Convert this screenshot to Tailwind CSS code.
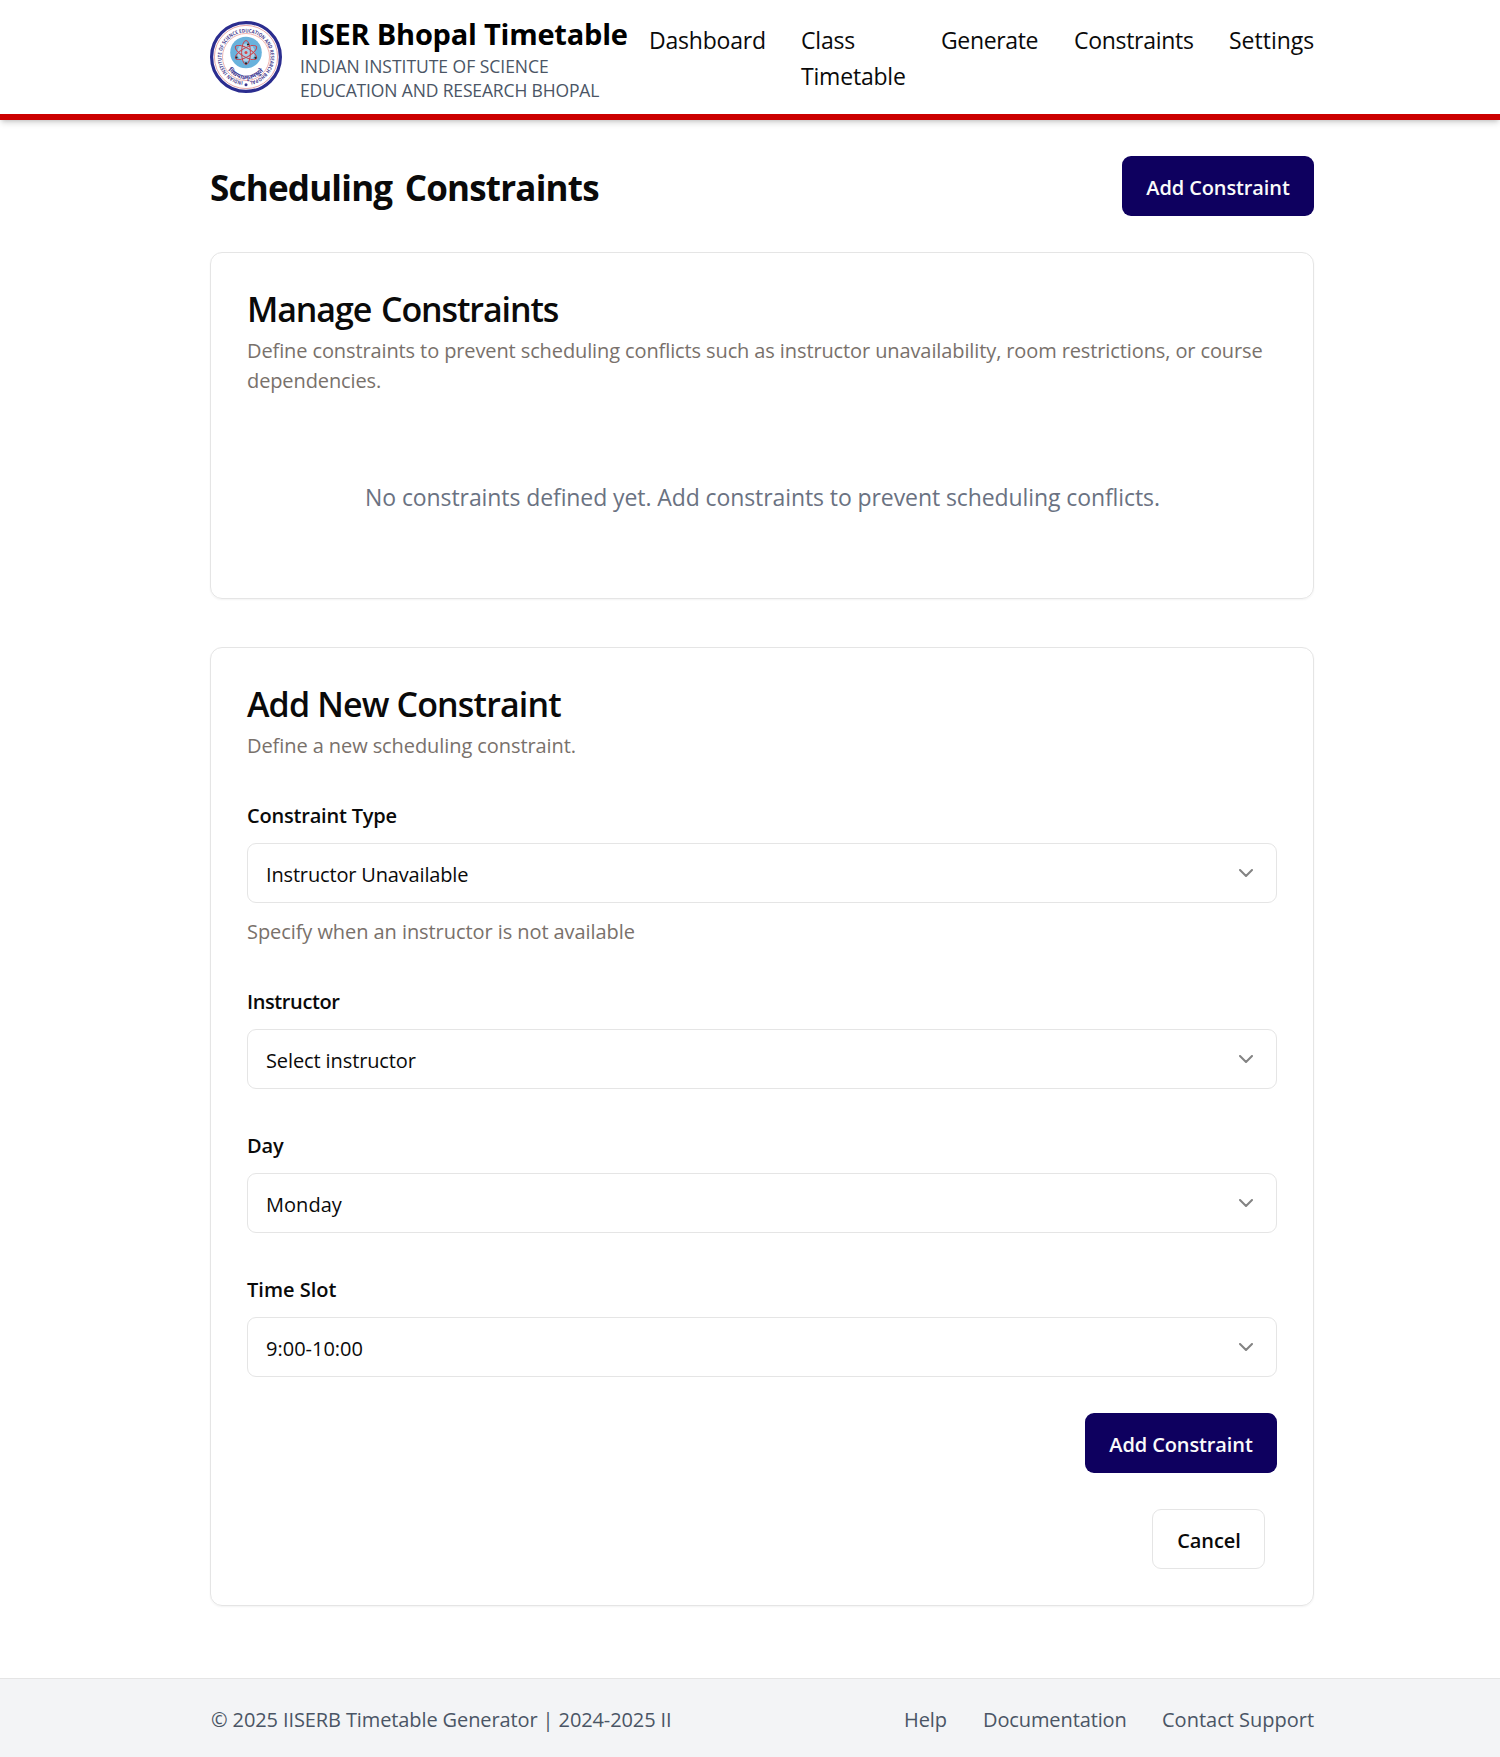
<!DOCTYPE html>
<html lang="en">
<head>
<meta charset="utf-8">
<title>IISER Bhopal Timetable</title>
<script src="https://cdn.jsdelivr.net/npm/@tailwindcss/browser@4"></script>
</head>
<body class="flex min-h-screen flex-col bg-white font-['Open_Sans','Noto_Sans',sans-serif] text-[20px] leading-[30px] tracking-[-0.11px] text-neutral-950">

<header class="h-[120px] border-b-6 border-[#cc0000] bg-white pl-6 shadow-[0_4px_6px_-1px_rgba(0,0,0,0.15),0_2px_4px_-2px_rgba(0,0,0,0.15)]">
  <div class="mx-auto flex w-[1104px] justify-between">
    <div class="flex">
      <svg class="mt-[21px] size-[72px] shrink-0" viewBox="0 0 72 72" fill="none">
        <defs>
          <path id="ring" d="M33 60.3A24.5 24.5 0 1 1 39 60.3"/>
          <path id="motto" d="M18 49Q36 68 54.5 49"/>
        </defs>
        <circle cx="36" cy="36" r="34.4" fill="#fff" stroke="#2b2d8f" stroke-width="3.2"/>
        <circle cx="36" cy="36" r="31.6" stroke="#e9a9a9" stroke-width="1"/>
        <circle cx="36" cy="36" r="23.5" stroke="#efb6b4" stroke-width="1"/>
        <circle cx="36" cy="31.5" r="15.8" fill="#69b2dc"/>
        <circle cx="36" cy="31.5" r="9" fill="#a9d0e8"/>
        <g stroke="#c9414a" stroke-width="1">
          <ellipse cx="36" cy="31.5" rx="4.4" ry="12"/>
          <ellipse cx="36" cy="31.5" rx="4.4" ry="12" transform="rotate(60 36 31.5)"/>
          <ellipse cx="36" cy="31.5" rx="4.4" ry="12" transform="rotate(-60 36 31.5)"/>
        </g>
        <circle cx="36" cy="31.5" r="1.5" fill="#d9444a"/>
        <g fill="#222">
          <circle cx="38" cy="23.5" r="1.1"/><circle cx="26.5" cy="36.5" r="1.1"/><circle cx="45.5" cy="36.8" r="1.1"/><circle cx="36" cy="42.3" r="1.1"/>
        </g>
        <text class="font-['Open_Sans',sans-serif] text-[5.2px] font-bold tracking-normal" fill="#4a3f8f"><textPath href="#ring" textLength="147" lengthAdjust="spacingAndGlyphs">INDIAN INSTITUTE OF SCIENCE EDUCATION AND RESEARCH BHOPAL</textPath></text>
        <text class="font-['Noto_Sans',sans-serif] text-[6px] font-bold tracking-normal" fill="#3a3590"><textPath href="#motto" textLength="41" lengthAdjust="spacingAndGlyphs">विद्ययाऽमृतमश्नुते</textPath></text>
        <circle cx="36" cy="63.8" r="1.5" fill="#3a3590"/>
      </svg>
      <div class="ml-[18px] pt-[15px]">
        <h1 class="text-[29px] leading-[38px] font-bold tracking-[-0.22px] whitespace-nowrap text-black">IISER Bhopal Timetable</h1>
        <p class="mt-px text-[17.5px] leading-6 tracking-[-0.02px] whitespace-nowrap text-gray-600">INDIAN INSTITUTE OF SCIENCE<br><span class="tracking-[-0.14px]">EDUCATION AND RESEARCH BHOPAL</span></p>
      </div>
    </div>
    <nav class="-mr-px grid grid-cols-[116px_104px_97px_119px_86px] gap-9 pt-[22px] text-[23px] leading-9 tracking-[-0.26px] whitespace-nowrap">
      <a class="tracking-[-0.2px]">Dashboard</a>
      <a class="tracking-[-0.2px]">Class<br>Timetable</a>
      <a class="tracking-[-0.36px]">Generate</a>
      <a class="tracking-[-0.3px]">Constraints</a>
      <a class="tracking-normal">Settings</a>
    </nav>
  </div>
</header>

<main class="grow pt-9 pl-6">
  <div class="mx-auto w-[1104px]">
    <div class="flex h-[60px] items-center justify-between">
      <h2 class="pt-[4px] text-[35px] leading-[48px] font-bold tracking-[-0.79px] [word-spacing:4px]">Scheduling Constraints</h2>
      <button class="h-[60px] w-48 rounded-[9px] bg-[#0e005f] pt-[3px] font-semibold text-neutral-50">Add Constraint</button>
    </div>

    <section class="mt-9 h-[347px] rounded-xl border border-neutral-200 px-9 pt-[38px] shadow-[0_1px_2px_rgba(0,0,0,0.05)]">
      <h3 class="text-[34px] leading-9 font-semibold tracking-[-1.1px] [word-spacing:2px]">Manage Constraints</h3>
      <p class="mt-[9px] text-stone-500">Define constraints to prevent scheduling conflicts such as instructor unavailability, room restrictions, or course dependencies.</p>
      <p class="mt-[83px] pl-px text-center text-[23px] leading-9 tracking-[-0.09px] text-gray-500">No constraints defined yet. Add constraints to prevent scheduling conflicts.</p>
    </section>

    <section class="mt-12 rounded-xl border border-neutral-200 px-9 pt-[38px] pb-9 shadow-[0_1px_2px_rgba(0,0,0,0.05)]">
      <h3 class="text-[34px] leading-9 font-semibold tracking-[-0.86px]">Add New Constraint</h3>
      <p class="mt-[9px] tracking-[-0.08px] text-stone-500">Define a new scheduling constraint.</p>

      <form class="mt-10 flex flex-col">
        <label class="font-semibold tracking-[-0.2px]">Constraint Type</label>
        <div class="mt-3 flex h-[60px] items-center justify-between rounded-[9px] border border-neutral-200 px-[18px]">
          <span class="pt-1 tracking-[-0.16px]">Instructor Unavailable</span>
          <svg class="size-6 opacity-50" viewBox="0 0 24 24" fill="none" stroke="currentColor" stroke-width="2" stroke-linecap="round" stroke-linejoin="round"><path d="m6 9 6 6 6-6"/></svg>
        </div>
        <p class="mt-[14px] tracking-[-0.07px] text-stone-500">Specify when an instructor is not available</p>

        <label class="mt-10 font-semibold tracking-[-0.4px]">Instructor</label>
        <div class="mt-3 flex h-[60px] items-center justify-between rounded-[9px] border border-neutral-200 px-[18px]">
          <span class="pt-1">Select instructor</span>
          <svg class="size-6 opacity-50" viewBox="0 0 24 24" fill="none" stroke="currentColor" stroke-width="2" stroke-linecap="round" stroke-linejoin="round"><path d="m6 9 6 6 6-6"/></svg>
        </div>

        <label class="mt-[42px] font-semibold tracking-[-0.1px]">Day</label>
        <div class="mt-3 flex h-[60px] items-center justify-between rounded-[9px] border border-neutral-200 px-[18px]">
          <span class="pt-1 tracking-[0.04px]">Monday</span>
          <svg class="size-6 opacity-50" viewBox="0 0 24 24" fill="none" stroke="currentColor" stroke-width="2" stroke-linecap="round" stroke-linejoin="round"><path d="m6 9 6 6 6-6"/></svg>
        </div>

        <label class="mt-[42px] font-semibold tracking-normal">Time Slot</label>
        <div class="mt-3 flex h-[60px] items-center justify-between rounded-[9px] border border-neutral-200 px-[18px]">
          <span class="pt-1 tracking-normal">9:00-10:00</span>
          <svg class="size-6 opacity-50" viewBox="0 0 24 24" fill="none" stroke="currentColor" stroke-width="2" stroke-linecap="round" stroke-linejoin="round"><path d="m6 9 6 6 6-6"/></svg>
        </div>

        <button type="button" class="mt-9 h-[60px] w-48 self-end rounded-[9px] bg-[#0e005f] pt-[3px] font-semibold text-neutral-50">Add Constraint</button>
        <button type="button" class="mt-9 mr-3 h-[60px] w-[113px] self-end rounded-[9px] border border-neutral-200 pt-[3px] pl-px font-semibold tracking-[-0.1px]">Cancel</button>
      </form>
    </section>
  </div>
</main>

<footer class="h-[79px] border-t border-neutral-200 bg-gray-100 pt-[26px] pl-6 text-gray-600">
  <div class="mx-auto flex w-[1104px] justify-between">
    <p class="pl-px">© 2025 IISERB Timetable Generator | 2024-2025 II</p>
    <div class="-mr-px grid grid-cols-[43px_143px_153px] gap-9 whitespace-nowrap">
      <a>Help</a>
      <a>Documentation</a>
      <a class="tracking-normal">Contact Support</a>
    </div>
  </div>
</footer>
</body>
</html>
